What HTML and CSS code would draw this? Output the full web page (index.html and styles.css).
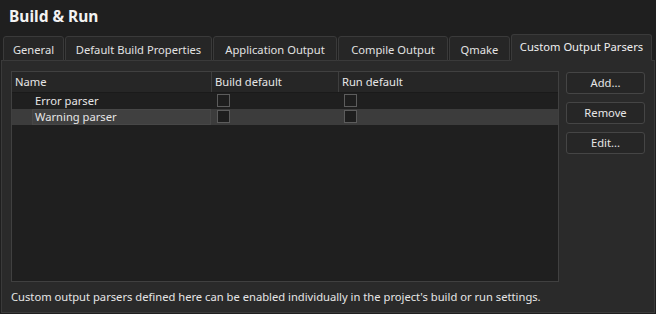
FILE: index.html
```html
<!DOCTYPE html>
<html>
<head>
<meta charset="utf-8">
<link rel="stylesheet" href="styles.css">
</head>
<body>
<div class="title">Build &amp; Run</div>
<div class="tabs">
  <div class="tab w-general">General</div>
  <div class="tab w-default">Default Build Properties</div>
  <div class="tab w-app">Application Output</div>
  <div class="tab w-compile">Compile Output</div>
  <div class="tab w-qmake">Qmake</div>
  <div class="tab w-custom active">Custom Output Parsers</div>
</div>
<div class="pane">
  <div class="content">
    <div class="table">
      <div class="row header">
        <div class="c1">Name</div>
        <div class="c2">Build default</div>
        <div class="c3">Run default</div>
      </div>
      <div class="row">
        <div class="c1"><span class="name">Error parser</span></div>
        <div class="c2"><span class="check"></span></div>
        <div class="c3"><span class="check"></span></div>
      </div>
      <div class="row selected">
        <div class="c1"><span class="name focus">Warning parser</span></div>
        <div class="c2"><span class="check"></span></div>
        <div class="c3"><span class="check"></span></div>
      </div>
    </div>
    <div class="buttons">
      <div class="btn">Add...</div>
      <div class="btn">Remove</div>
      <div class="btn">Edit...</div>
    </div>
  </div>
  <div class="note">Custom output parsers defined here can be enabled individually in the project's build or run settings.</div>
</div>
</body>
</html>
```
FILE: styles.css
```css
html, body {
  margin: 0;
  padding: 0;
  background: #1f1f1f;
  color: #e6e6e6;
  font-family: "Noto Sans", "Open Sans", sans-serif;
  font-size: 11.2px;
  width: 656px;
  height: 314px;
  overflow: hidden;
}
.title {
  height: 34px;
  box-sizing: border-box;
  padding: 5px 0 0 9px;
  font-weight: bold;
  font-size: 15.5px;
  line-height: 22px;
  color: #f2f2f2;
}
.tabs {
  display: flex;
  align-items: flex-end;
  gap: 1px;
  padding-left: 3px;
  height: 27px;
  position: relative;
  z-index: 1;
  margin-bottom: -1px;
}
.tab {
  flex: none;
  height: 25px;
  box-sizing: border-box;
  border: 1px solid #3a3a3a;
  border-radius: 3px 3px 0 0;
  background: #262626;
  text-align: center;
  line-height: 25px;
  color: #e2e2e2;
  white-space: nowrap;
}
.w-general { width: 61px; }
.w-default { width: 147px; }
.w-app { width: 124px; }
.w-compile { width: 110px; }
.w-qmake { width: 61px; }
.w-custom { width: 141px; }
.tab.active {
  height: 27px;
  background: #2a2a2a;
  border-bottom-color: #2a2a2a;
  line-height: 24px;
  color: #f0f0f0;
}
.pane {
  margin: 0 1px;
  height: 253px;
  box-sizing: border-box;
  background: #2a2a2a;
  border: 1px solid #3a3a3a;
  padding: 10px 9px 0 9px;
}
.content {
  display: flex;
  gap: 7px;
}
.table {
  width: 549px;
  height: 211px;
  box-sizing: border-box;
  background: #1f1f1f;
  border: 1px solid #404040;
}
.row {
  display: flex;
  height: 16px;
  line-height: 16px;
}
.row.header {
  height: 20px;
  line-height: 19px;
  background: #262626;
  border-bottom: 1px solid #1a1a1a;
}
.header .c1, .header .c2 {
  border-right: 1px solid #3e3e3e;
}
.c1 { width: 199px; padding-left: 3px; box-sizing: border-box; }
.c2 { width: 127px; padding-left: 3px; box-sizing: border-box; }
.c3 { flex: 1; padding-left: 3px; box-sizing: border-box; }
.header .c1 { width: 200px; }
.header .c2 { width: 127px; }
.row .name {
  display: inline-block;
  margin-left: 17px;
  padding-left: 3px;
  width: 179px;
  box-sizing: border-box;
}
.row.selected { background: #3c3c3c; }
.row .name.focus {
  background: #404040;
  border: 1px solid #474747;
  line-height: 14px;
  height: 16px;
  padding-left: 2px;
}
.check {
  display: inline-block;
  width: 13px;
  height: 13px;
  box-sizing: border-box;
  border: 1px solid #5c5c5c;
  background: #1e1e1e;
  margin-left: 3px;
  margin-top: 1px;
  vertical-align: top;
}
.buttons {
  display: flex;
  flex-direction: column;
  gap: 8px;
  padding-top: 1px;
}
.btn {
  width: 79px;
  height: 22px;
  box-sizing: border-box;
  border: 1px solid #454545;
  border-radius: 3px;
  background: #262626;
  text-align: center;
  line-height: 20px;
  color: #e6e6e6;
}
.note {
  margin-top: 7px;
  line-height: 16px;
  color: #e6e6e6;
}
```
